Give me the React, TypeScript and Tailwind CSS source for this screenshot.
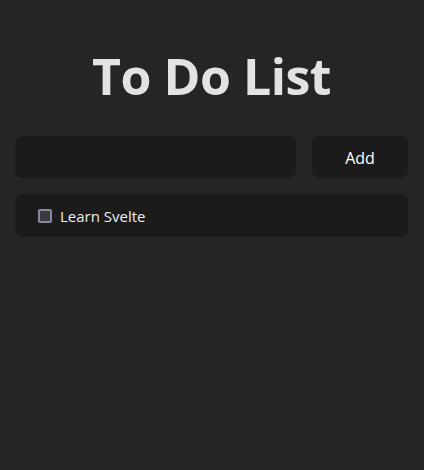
export default function App() {
  return (
    <div
      className="min-h-[470px] w-full bg-[#252525] pl-[15px] pr-[16px] pt-[44px] text-[#e6e6e6]"
      style={{ fontFamily: '"Open Sans", "Noto Sans", sans-serif' }}
    >
      <h1 className="text-center text-[50px] font-bold leading-[64px] tracking-[-0.5px] text-[#e3e3e3]">
        To Do List
      </h1>

      <div className="mt-[28px] flex gap-4">
        <input
          type="text"
          className="h-[42px] flex-1 rounded-lg bg-[#1b1b1b] px-3 text-base text-white outline-none"
        />
        <button className="h-[42px] w-[96px] rounded-lg bg-[#1b1b1b] pt-[2px] text-base text-white">
          Add
        </button>
      </div>

      <div className="mt-4 flex h-[43px] items-center rounded-lg bg-[#1b1b1b] pl-[23px]">
        <span className="h-[14px] w-[14px] rounded-[2px] border-2 border-[#8a8a96] bg-[#3a3a44]" />
        <span className="ml-2 pt-[2px] text-[15px] text-[#eeeeee]">Learn Svelte</span>
      </div>
    </div>
  );
}
